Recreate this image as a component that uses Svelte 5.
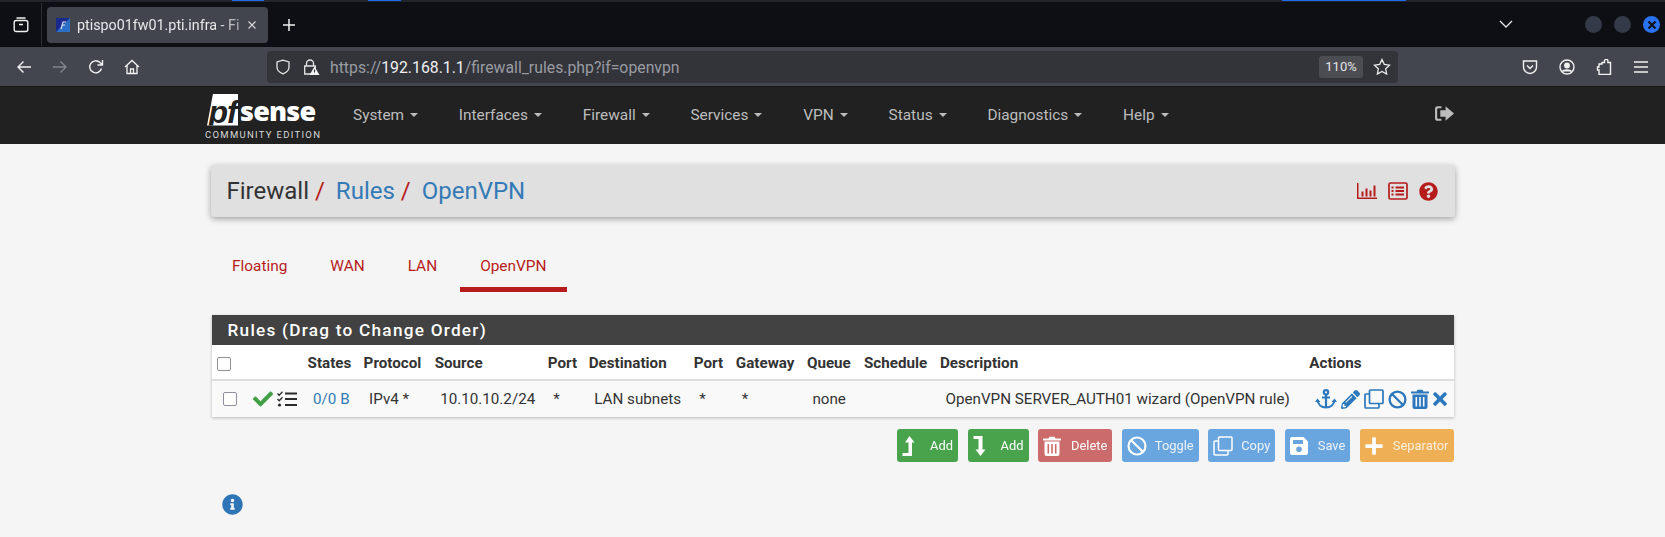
<script>
  // browser chrome plus the pfSense rules page
  const menu = ['System', 'Interfaces', 'Firewall', 'Services', 'VPN', 'Status', 'Diagnostics', 'Help'];
  const tabs = ['Floating', 'WAN', 'LAN', 'OpenVPN'];
  const heads = ['States', 'Protocol', 'Source', 'Port', 'Destination', 'Port', 'Gateway', 'Queue', 'Schedule', 'Description'];
  const widths = [56, 71, 113, 41, 105, 42, 71, 57, 76, 369];
</script>

<div class="tabbar">
  <div class="stripe"><i style="left:232px;width:32px"></i><i style="left:368px;width:33px"></i><i style="left:1282px;width:124px"></i></div>
  <div class="tablist">
    <svg viewBox="0 0 16 16" width="16" height="16" fill="none" stroke="#f2f2f2" stroke-width="1.4"><rect x="1.2" y="3.5" width="13.6" height="11" rx="2" /><path d="M3.5 1h9M6 7.5h4" /></svg>
  </div>
  <div class="tab">
    <svg class="favicon" viewBox="0 0 14 14" width="14" height="14"><rect width="14" height="14" fill="#1a2a8c" /><path d="M0 14 14 0v14z" fill="#2d6fc4" /><path d="M5 11 7 4h3M6 7h3" stroke="#dfe6f5" stroke-width="1.2" fill="none" /></svg>
    <span class="tabtitle">ptispo01fw01.pti.infra - Fi</span>
    <svg viewBox="0 0 10 10" width="10" height="10" stroke="#d8d8dc" stroke-width="1.1"><path d="M1.5 1.5l7 7M8.5 1.5l-7 7" /></svg>
  </div>
  <svg class="newtab" viewBox="0 0 14 14" width="14" height="14" stroke="#f2f2f2" stroke-width="1.5"><path d="M7 1v12M1 7h12" /></svg>
  <div class="winctl">
    <svg class="chev" viewBox="0 0 14 8" width="14" height="8" fill="none" stroke="#e6e6e6" stroke-width="1.3"><path d="M1 1l6 6 6-6" /></svg>
    <span class="dot"></span>
    <span class="dot"></span>
    <span class="dot close"><svg viewBox="0 0 10 10" width="10" height="10" stroke="#10131a" stroke-width="2.2"><path d="M1.5 1.5l7 7M8.5 1.5l-7 7" /></svg></span>
  </div>
</div>

<div class="toolbar">
  <div class="navbtns">
    <svg viewBox="0 0 16 16" width="16" height="16" fill="none" stroke="#f2f2f2" stroke-width="1.4"><path d="M15 8H2M7.5 2.5 2 8l5.5 5.5" /></svg>
    <svg viewBox="0 0 16 16" width="16" height="16" fill="none" stroke="#82858c" stroke-width="1.4"><path d="M1 8h13M8.500 2.500 14 8l-5.500 5.500" /></svg>
    <svg viewBox="0 0 16 16" width="16" height="16" fill="none" stroke="#f2f2f2" stroke-width="1.4"><path d="M13.500 9.500A6 6 0 1 1 12 3.600L14 5.500M14.500 1v5h-5" /></svg>
    <svg viewBox="0 0 16 16" width="16" height="16" fill="none" stroke="#f2f2f2" stroke-width="1.3"><path d="M1 8 8 1.500 15 8M3 6.500V14.500h10V6.500M6.500 14.500v-4.500h3v4.500" /></svg>
  </div>
  <div class="urlbar">
    <svg viewBox="0 0 16 16" width="16" height="16" fill="none" stroke="#e6e6e6" stroke-width="1.3"><path d="M8 1.200 2 3v5c0 3.400 2.500 5.600 6 6.800 3.500-1.200 6-3.400 6-6.800V3z" /></svg>
    <svg class="lock" viewBox="0 0 18 16" width="18" height="16"><path d="M4.500 7V4.500a3.500 3.500 0 0 1 7 0V7M2.700 7h10.600v8H2.700z" fill="none" stroke="#e6e6e6" stroke-width="1.3" /><path d="M12.500 7.500l5 8.500h-10z" fill="#f2f2f2" /><path d="M12.500 10.500v3" stroke="#33353b" stroke-width="1.100" /></svg>
    <span class="url">https://<b>192.168.1.1</b>/firewall_rules.php?if=openvpn</span>
    <span class="zoomlevel">110%</span>
    <svg viewBox="0 0 18 18" width="18" height="18" fill="none" stroke="#ececec" stroke-width="1.3"><path d="M9 1.500l2.300 4.900 5.200.7-3.800 3.700.9 5.300L9 13.500l-4.600 2.600.9-5.300L1.500 7.100l5.200-.7z" /></svg>
  </div>
  <div class="toolicons">
    <svg viewBox="0 0 16 16" width="16" height="16" fill="none" stroke="#f2f2f2" stroke-width="1.400"><path d="M1.500 2h13v6a6.500 6.500 0 0 1-13 0z" /><path d="M5 6.500 8 9.500l3-3" /></svg>
    <svg viewBox="0 0 16 16" width="16" height="16" fill="none" stroke="#f2f2f2" stroke-width="1.400"><circle cx="8" cy="8" r="7" /><circle cx="8" cy="6.500" r="2.200" fill="#f2f2f2" /><path d="M3.500 12.500c1-2 7.500-2 9 0" fill="#f2f2f2" /></svg>
    <svg viewBox="0 0 16 16" width="16" height="16" fill="none" stroke="#f2f2f2" stroke-width="1.400"><path d="M6 3.500h2.500V2a1.700 1.700 0 0 1 3.400 0v1.500H14.500v12H3V11H1.500V8H3V5H6z" /></svg>
    <svg viewBox="0 0 16 16" width="16" height="16" stroke="#f2f2f2" stroke-width="1.500"><path d="M1 3h14M1 8h14M1 13h14" /></svg>
  </div>
</div>

<nav class="topnav">
  <div class="logo">
    <div class="mark"><span class="pf">pf</span><span class="sense">sense</span></div>
    <div class="edition">COMMUNITY EDITION</div>
  </div>
  <ul class="menu">
    {#each menu as item}
      <li>{item}<span class="caret"></span></li>
    {/each}
  </ul>
  <svg class="logout" viewBox="0 0 19 16" width="20" height="17" fill="#bdbdbd"><path d="M7 1H3.500A2.500 2.500 0 0 0 1 3.500v9A2.500 2.500 0 0 0 3.500 15H7v-2H4a1 1 0 0 1-1-1V4a1 1 0 0 1 1-1h3z" /><path d="M11 1l8 7-8 7v-4H6V5h5z" /></svg>
</nav>

<main class="page">
  <div class="titlebar">
    <h1>Firewall <em>/</em><a href="#rules">Rules</a> <em>/</em><a href="#openvpn">OpenVPN</a></h1>
    <div class="titleicons">
      <svg viewBox="0 0 20 18" width="20" height="18" fill="#b71c1c"><path d="M0 1h1.500v14.500H20V17H0z" /><path d="M4.500 9.500h2v5h-2zM8.500 6.500h2v8h-2zM12.500 8.500h2v6h-2zM16.500 3.500h2v11h-2z" /></svg>
      <svg viewBox="0 0 20 18" width="20" height="18" fill="none" stroke="#b71c1c" stroke-width="1.700"><rect x="1" y="1" width="18" height="16" rx="1.500" /><path d="M7.500 5.500H16M7.500 9H16M7.500 12.500H16" stroke-width="1.800" /><path d="M3.500 5.500h2M3.500 9h2M3.500 12.500h2" stroke-width="2" /></svg>
      <svg viewBox="0 0 512 512" width="19" height="19" fill="#b71c1c"><path d="M504 256c0 136.997-111.043 248-248 248S8 392.997 8 256C8 119.083 119.043 8 256 8s248 111.083 248 248zM262.655 90c-54.497 0-89.255 22.957-116.549 63.758-3.536 5.286-2.353 12.415 2.715 16.258l34.699 26.31c5.205 3.947 12.621 3.008 16.665-2.122 17.864-22.658 30.113-35.797 57.303-35.797 20.429 0 45.698 13.148 45.698 32.958 0 14.976-12.363 22.667-32.534 33.976C247.128 238.528 216 254.941 216 296v4c0 6.627 5.373 12 12 12h56c6.627 0 12-5.373 12-12v-1.333c0-28.462 83.186-29.647 83.186-106.667 0-58.002-60.165-102-116.531-102zM256 338c-25.365 0-46 20.635-46 46 0 25.364 20.635 46 46 46s46-20.636 46-46c0-25.365-20.635-46-46-46z" /></svg>
    </div>
  </div>

  <ul class="tabs">
    {#each tabs as t}
      <li class:active={t === 'OpenVPN'}>{t}</li>
    {/each}
  </ul>

  <section class="panel">
    <h2>Rules (Drag to Change Order)</h2>
    <table>
      <colgroup>
        <col style="width:96px" />
        {#each widths as w}<col style="width:{w}px" />{/each}
        <col style="width:144px" />
      </colgroup>
      <thead>
        <tr>
          <th><span class="cb head"></span></th>
          {#each heads as h}<th>{h}</th>{/each}
          <th>Actions</th>
        </tr>
      </thead>
      <tbody>
        <tr>
          <td class="first">
            <span class="cb"></span>
            <svg viewBox="0 0 512 512" width="20" height="20" fill="#43a047"><path d="M173.898 439.404l-166.4-166.4c-9.997-9.997-9.997-26.206 0-36.204l36.203-36.204c9.997-9.998 26.207-9.998 36.204 0L192 312.69 432.095 72.596c9.997-9.997 26.207-9.997 36.204 0l36.203 36.204c9.997 9.997 9.997 26.206 0 36.204l-294.4 294.401c-9.998 9.997-26.207 9.997-36.204-.001z" /></svg>
            <svg class="tasks" viewBox="0 0 20 16" width="20" height="16" fill="none" stroke="#2b2b2b"><path d="M8 2.500h12M8 8h12M8 14h12" stroke-width="2.200" /><path d="M.5 2.500l1.700 1.700L5.500.8M.5 8l1.700 1.700L5.500 6.300" stroke-width="1.300" /><circle cx="2.500" cy="14" r="1.600" fill="#2b2b2b" stroke="none" /></svg>
          </td>
          <td><a href="#states">0/0 B</a></td>
          <td>IPv4 *</td>
          <td>10.10.10.2/24</td>
          <td>*</td>
          <td>LAN subnets</td>
          <td>*</td>
          <td class="gw">*</td>
          <td>none</td>
          <td></td>
          <td>OpenVPN SERVER_AUTH01 wizard (OpenVPN rule)</td>
          <td class="actions">
            <svg viewBox="0 0 22 20" width="22" height="20" fill="none" stroke="#2b78bc" stroke-width="2.200"><circle cx="11" cy="3.300" r="2.200" /><path d="M11 5.500V18.500M7 8.500h8M2.500 11c.5 4.500 4 7.500 8.500 7.500s8-3 8.500-7.500" /><path d="M0 13l2.500-3.500L5.500 13zM16.500 13l3-3.500L22 13z" fill="#2b78bc" stroke="none" /></svg>
            <svg viewBox="0 0 512 512" width="19" height="19" fill="#2b78bc"><path d="M497.9 142.1l-46.1 46.1c-4.7 4.7-12.3 4.7-17 0l-111-111c-4.7-4.7-4.7-12.3 0-17l46.1-46.1c18.7-18.7 49.1-18.7 67.9 0l60.1 60.1c18.8 18.7 18.8 49.1 0 67.9zM284.2 99.8L21.6 362.4.4 483.9c-2.9 16.4 11.4 30.6 27.8 27.8l121.5-21.3 262.6-262.6c4.7-4.7 4.7-12.3 0-17l-111-111c-4.8-4.700-12.400-4.700-17.100 0zM124.100 339.900c-5.500-5.500-5.500-14.300 0-19.800l154-154c5.500-5.500 14.300-5.500 19.800 0s5.500 14.300 0 19.800l-154 154c-5.500 5.500-14.300 5.500-19.800 0zM88 424h48v36.300l-64.500 11.300-31.100-31.100L51.700 376H88v48z" /></svg>
            <svg viewBox="0 0 20 20" width="20" height="20" fill="none" stroke="#2b78bc" stroke-width="1.700"><rect x="5.500" y="1" width="13.500" height="13.500" rx="1" /><path d="M5.500 5H2a1 1 0 0 0-1 1v12a1 1 0 0 0 1 1h12a1 1 0 0 0 1-1v-3.500" /></svg>
            <svg viewBox="0 0 20 20" width="19" height="19" fill="none" stroke="#2b78bc" stroke-width="2.400"><circle cx="10" cy="10" r="8.300" /><path d="M4.200 4.200 15.800 15.800" /></svg>
            <svg viewBox="0 0 18 20" width="18" height="20" fill="#2b78bc"><path d="M0 2.500h5.500L6.500.7h5l1 1.800H18v2H0zM1.500 5.500h15V18a2 2 0 0 1-2 2h-11a2 2 0 0 1-2-2zM4.500 8v9.500h1.600V8zM8.200 8v9.500h1.600V8zM11.900 8v9.500h1.600V8z" fill-rule="evenodd" /></svg>
            <svg viewBox="0 0 352 512" width="14" height="20" fill="#2b78bc"><path d="M242.72 256l100.07-100.07c12.28-12.28 12.28-32.19 0-44.48l-22.24-22.24c-12.28-12.28-32.19-12.28-44.48 0L176 189.28 75.93 89.21c-12.28-12.28-32.19-12.28-44.48 0L9.21 111.45c-12.28 12.28-12.28 32.19 0 44.48L109.28 256 9.21 356.07c-12.28 12.28-12.28 32.19 0 44.48l22.24 22.24c12.28 12.28 32.2 12.28 44.48 0L176 322.72l100.07 100.07c12.28 12.28 32.2 12.28 44.48 0l22.24-22.24c12.28-12.28 12.28-32.19 0-44.48L242.72 256z" /></svg>
          </td>
        </tr>
      </tbody>
    </table>
  </section>

  <div class="buttons">
    <button class="green">
      <svg viewBox="0 0 12 20" width="13" height="20" fill="#fff"><path d="M7 0l5 6.500H9.500V20H0v-3h6V6.500H2.500z" /></svg>Add
    </button>
    <button class="green">
      <svg viewBox="0 0 12 20" width="13" height="20" fill="#fff"><path d="M0 0h9v13.500h3L7 20 2 13.500h3V3H0z" /></svg>Add
    </button>
    <button class="red">
      <svg viewBox="0 0 18 20" width="18" height="20" fill="#fff"><path d="M0 2.500h5.500L6.500.7h5l1 1.800H18v2H0zM1.500 5.500h15V18a2 2 0 0 1-2 2h-11a2 2 0 0 1-2-2zM4.500 8v9.500h1.600V8zM8.200 8v9.500h1.600V8zM11.900 8v9.500h1.600V8z" fill-rule="evenodd" /></svg>Delete
    </button>
    <button class="blue">
      <svg viewBox="0 0 20 20" width="20" height="20" fill="none" stroke="#fff" stroke-width="2.200"><circle cx="10" cy="10" r="8.500" /><path d="M4.200 4.200 15.800 15.800" /></svg>Toggle
    </button>
    <button class="blue">
      <svg viewBox="0 0 20 20" width="20" height="20" fill="none" stroke="#fff" stroke-width="1.500"><rect x="5.500" y="1" width="13.500" height="13.500" rx="1" /><path d="M5.500 5H2a1 1 0 0 0-1 1v12a1 1 0 0 0 1 1h12a1 1 0 0 0 1-1v-3.500" /></svg>Copy
    </button>
    <button class="blue save">
      <svg viewBox="0 0 18 18" width="18" height="18" fill="#fff"><path fill-rule="evenodd" d="M2 0h11.500L18 4.500V16a2 2 0 0 1-2 2H2a2 2 0 0 1-2-2V2a2 2 0 0 1 2-2zM3 3v4h10V3zM9 9.500A2.800 2.800 0 1 0 9 15.100 2.800 2.800 0 0 0 9 9.500z" /></svg>Save
    </button>
    <button class="orange">
      <svg viewBox="0 0 448 512" width="18" height="20" fill="#fff"><path d="M416 208H272V64c0-17.67-14.33-32-32-32h-32c-17.67 0-32 14.33-32 32v144H32c-17.67 0-32 14.33-32 32v32c0 17.67 14.33 32 32 32h144v144c0 17.67 14.33 32 32 32h32c17.670 0 32-14.330 32-32V304h144c17.670 0 32-14.330 32-32v-32c0-17.670-14.330-32-32-32z" /></svg>Separator
    </button>
  </div>

  <svg class="info" viewBox="0 0 512 512" width="21" height="21" fill="#2f74b5"><path d="M256 8C119.043 8 8 119.083 8 256c0 136.997 111.043 248 248 248s248-111.003 248-248C504 119.083 392.957 8 256 8zm0 110c23.196 0 42 18.804 42 42s-18.804 42-42 42-42-18.804-42-42 18.804-42 42-42zm56 254c0 6.627-5.373 12-12 12h-88c-6.627 0-12-5.373-12-12v-24c0-6.627 5.373-12 12-12h12v-64h-12c-6.627 0-12-5.373-12-12v-24c0-6.627 5.373-12 12-12h64c6.627 0 12 5.373 12 12v100h12c6.627 0 12 5.373 12 12v24z" /></svg>
</main>

<style>
  :global(body) {
    background: #f5f5f5;
    font-family: Roboto, "Noto Sans", sans-serif;
    overflow: hidden;
  }

  svg {
    display: block;
    flex: none;
  }

  .tabbar {
    position: relative;
    height: 47px;
    box-sizing: border-box;
    background: #0d0f14;
    display: flex;
    align-items: center;
    padding-top: 2px;
  }

  .stripe {
    position: absolute;
    inset: 0 0 auto 0;
    height: 2px;
    background: #23252d;
  }

  .stripe i {
    position: absolute;
    top: 0;
    height: 1px;
    background: #1f6bf0;
  }

  .tablist {
    width: 42px;
    height: 43px;
    box-sizing: border-box;
    border-right: 1px solid #2c2e34;
    display: flex;
    align-items: center;
    justify-content: center;
  }

  .tab {
    width: 221px;
    height: 36px;
    box-sizing: border-box;
    margin-left: 5px;
    padding: 0 11px 0 9px;
    background: #42454d;
    border-radius: 4px;
    display: flex;
    align-items: center;
    color: #e8e8ea;
    font-size: 14.3px;
  }

  .tabtitle {
    width: 167px;
    margin: 0 5px 0 7px;
    white-space: nowrap;
    -webkit-mask-image: linear-gradient(90deg, #000 85%, #0008);
    mask-image: linear-gradient(90deg, #000 85%, #0008);
  }

  .newtab {
    margin-left: 14px;
  }

  .winctl {
    margin-left: auto;
    display: flex;
    align-items: center;
    gap: 12px;
    padding-right: 5px;
  }

  .chev {
    margin-right: 60px;
    margin-top: -2px;
  }

  .dot {
    width: 17px;
    height: 17px;
    border-radius: 50%;
    background: #353a48;
    display: flex;
    align-items: center;
    justify-content: center;
  }

  .dot.close {
    background: #2a72f0;
  }

  .toolbar {
    height: 40px;
    box-sizing: border-box;
    background: #43464f;
    border-bottom: 1px solid #16171a;
    display: flex;
    align-items: center;
  }

  .navbtns {
    width: 267px;
    box-sizing: border-box;
    padding-left: 16px;
    display: flex;
    gap: 20px;
  }

  .urlbar {
    width: 1131px;
    height: 32px;
    box-sizing: border-box;
    padding: 0 7px 0 8px;
    background: #32343a;
    border-radius: 4px;
    display: flex;
    align-items: center;
    gap: 7px;
  }

  .lock {
    margin-left: 4px;
  }

  .url {
    margin-left: 3px;
    margin-top: 1px;
    color: #9a9ca2;
    font-size: 15.8px;
  }

  .url b {
    font-weight: 400;
    color: #f0f0f2;
  }

  .zoomlevel {
    margin-left: auto;
    margin-right: 3px;
    width: 44px;
    height: 22px;
    line-height: 22px;
    text-align: center;
    background: #4b4d53;
    border-radius: 3px;
    color: #e4e4e6;
    font-size: 13px;
  }

  .toolicons {
    margin-left: auto;
    display: flex;
    gap: 21px;
    padding-right: 16px;
  }

  .topnav {
    height: 57px;
    box-sizing: border-box;
    padding-left: 205px;
    background: #212121;
    display: flex;
    align-items: center;
  }

  .logo {
    width: 115px;
    margin-top: 1px;
  }

  .mark {
    display: flex;
    align-items: flex-end;
    height: 33px;
  }

  .pf {
    width: 31px;
    height: 32px;
    margin-left: 2px;
    background: #fff;
    color: #212121;
    font: italic 700 32px/36px "Liberation Sans", sans-serif;
    letter-spacing: -1px;
    text-align: center;
    clip-path: polygon(6px 0, 100% 0, 100% 100%, 0 100%);
  }

  .sense {
    margin-left: 2px;
    color: #fff;
    font: 800 27px/31px "Open Sans", "Liberation Sans", sans-serif;
    letter-spacing: -0.8px;
  }

  .edition {
    margin-top: 3px;
    color: #d8d8d8;
    font-size: 9.5px;
    line-height: 11px;
    letter-spacing: 1.3px;
    white-space: nowrap;
  }

  .menu {
    list-style: none;
    margin: 0 0 0 33px;
    padding: 0;
    display: flex;
    gap: 40.800px;
    color: #bdbdbd;
    font-size: 15.4px;
  }

  .menu li {
    display: flex;
    align-items: center;
    margin-top: -2px;
  }

  .caret {
    width: 0;
    height: 0;
    margin-left: 6px;
    border-top: 4px solid #bdbdbd;
    border-left: 4px solid transparent;
    border-right: 4px solid transparent;
  }

  .logout {
    position: absolute;
    left: 1434px;
    top: 105px;
  }

  .page {
    position: relative;
    width: 1244px;
    margin: 0 auto;
    padding-top: 21px;
  }

  .titlebar {
    height: 52px;
    box-sizing: border-box;
    padding: 0 17px 0 16px;
    background: #e0e0e0;
    border-radius: 3px;
    box-shadow: 0 2px 6px rgba(0, 0, 0, 0.35);
    display: flex;
    align-items: center;
    justify-content: space-between;
  }

  h1 {
    margin: 0;
    font-size: 24px;
    font-weight: 400;
    color: #333;
  }

  h1 em {
    margin-right: 11px;
    font-style: normal;
    color: #b71c1c;
  }

  a {
    color: #337ab7;
    text-decoration: none;
  }

  .titleicons {
    display: flex;
    align-items: center;
    gap: 11px;
  }

  .tabs {
    list-style: none;
    margin: 33px 0 0 0;
    padding: 0;
    height: 42px;
    display: flex;
    color: #b71c1c;
    font-size: 15.4px;
  }

  .tabs li {
    padding: 7px 21.500px 0;
  }

  .tabs li.active {
    margin-left: 1px;
    padding: 7px 20.500px 0;
    border-bottom: 5px solid #b71c1c;
  }

  .panel {
    margin: 23px 1px 0;
    background: #fff;
    box-shadow: 0 1px 3px rgba(0, 0, 0, 0.25);
  }

  h2 {
    margin: 0;
    height: 30px;
    box-sizing: border-box;
    padding-left: 16px;
    background: #424242;
    color: #fff;
    font-size: 17.2px;
    line-height: 30px;
    font-weight: 500;
    letter-spacing: 1.25px;
  }

  table {
    width: 100%;
    table-layout: fixed;
    border-collapse: collapse;
    font-size: 15.2px;
    color: #333;
  }

  th {
    height: 32px;
    padding: 2px 0 0;
    text-align: left;
    font-weight: 700;
    border-bottom: 2px solid #ddd;
    font-size: 15.2px;
  }

  th:first-child {
    padding-left: 5px;
  }

  td {
    height: 36px;
    padding: 0 0 0 5.500px;
    background: #f9f9f9;
    white-space: nowrap;
  }

  td.gw {
    padding-left: 6px;
  }

  .first {
    padding-left: 11px;
    font-size: 0;
  }

  .first,
  .actions {
    vertical-align: middle;
  }

  .first svg,
  .actions svg,
  .first .cb {
    display: inline-block;
    vertical-align: middle;
  }

  .first svg:first-of-type {
    margin-left: 16px;
  }

  .tasks {
    margin-left: 4px;
  }

  .cb {
    display: inline-block;
    width: 14px;
    height: 14px;
    box-sizing: border-box;
    border: 1.500px solid #8f8f9d;
    border-radius: 2px;
    background: #fff;
    vertical-align: middle;
  }

  .actions {
    padding-left: 6px;
    font-size: 0;
  }

  .actions svg {
    margin-right: 4px;
  }

  .buttons {
    margin: 12px 1px 0 0;
    display: flex;
    justify-content: flex-end;
    gap: 9.500px;
  }

  button {
    height: 33px;
    box-sizing: border-box;
    padding: 0 4px;
    border: 1px solid transparent;
    border-radius: 3px;
    color: #fff;
    font: 400 12.900px Roboto, sans-serif;
    display: flex;
    align-items: center;
    gap: 8px;
    opacity: 0.96;
  }

  .green {
    background: #43a047;
    gap: 15px;
  }

  .red {
    background: #cb6666;
    gap: 10px;
  }

  .blue {
    background: #64a2de;
    color: #eef4fb;
  }

  .save {
    gap: 10px;
  }

  .orange {
    background: #efad4e;
    color: #fbeedb;
    gap: 10px;
  }

  .info {
    margin: 32px 0 0 11px;
  }
</style>
